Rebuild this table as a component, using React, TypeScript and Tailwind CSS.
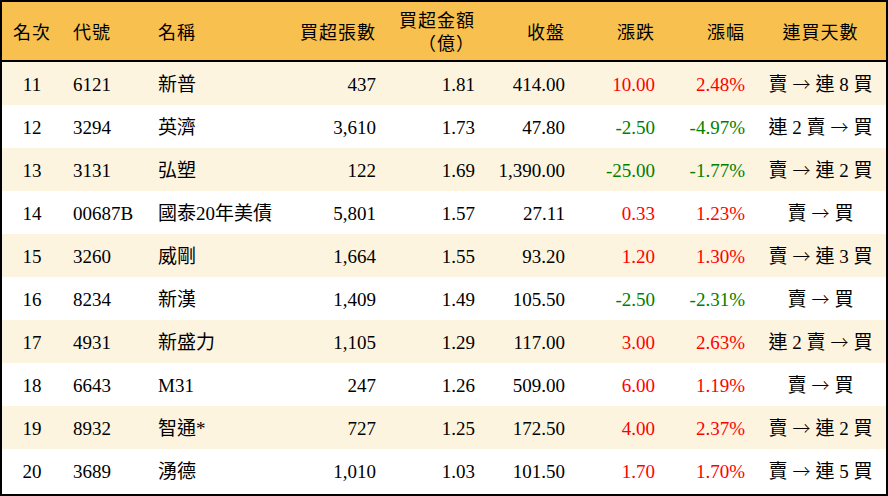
import React from 'react'

type Row = {
  rank: number
  code: string
  name: string
  lots: string
  amount: string
  close: string
  change: string
  pct: string
  streak: string
}

const rows: Row[] = [
  { rank: 11, code: '6121', name: '新普', lots: '437', amount: '1.81', close: '414.00', change: '10.00', pct: '2.48%', streak: '賣→連 8 買' },
  { rank: 12, code: '3294', name: '英濟', lots: '3,610', amount: '1.73', close: '47.80', change: '-2.50', pct: '-4.97%', streak: '連 2 賣→買' },
  { rank: 13, code: '3131', name: '弘塑', lots: '122', amount: '1.69', close: '1,390.00', change: '-25.00', pct: '-1.77%', streak: '賣→連 2 買' },
  { rank: 14, code: '00687B', name: '國泰20年美債', lots: '5,801', amount: '1.57', close: '27.11', change: '0.33', pct: '1.23%', streak: '賣→買' },
  { rank: 15, code: '3260', name: '威剛', lots: '1,664', amount: '1.55', close: '93.20', change: '1.20', pct: '1.30%', streak: '賣→連 3 買' },
  { rank: 16, code: '8234', name: '新漢', lots: '1,409', amount: '1.49', close: '105.50', change: '-2.50', pct: '-2.31%', streak: '賣→買' },
  { rank: 17, code: '4931', name: '新盛力', lots: '1,105', amount: '1.29', close: '117.00', change: '3.00', pct: '2.63%', streak: '連 2 賣→買' },
  { rank: 18, code: '6643', name: 'M31', lots: '247', amount: '1.26', close: '509.00', change: '6.00', pct: '1.19%', streak: '賣→買' },
  { rank: 19, code: '8932', name: '智通*', lots: '727', amount: '1.25', close: '172.50', change: '4.00', pct: '2.37%', streak: '賣→連 2 買' },
  { rank: 20, code: '3689', name: '湧德', lots: '1,010', amount: '1.03', close: '101.50', change: '1.70', pct: '1.70%', streak: '賣→連 5 買' },
]

const cols = 'grid grid-cols-[60px_86px_142px_96px_99px_90px_90px_90px_131px]'

// arrow gets the CJK font so it comes out long and thin like the reference
function Streak({ text }: { text: string }) {
  const [before, after] = text.split('→')
  return (
    <div className="text-center whitespace-pre">
      {before}
      <span style={{ fontFamily: '"Noto Sans CJK TC", sans-serif' }} className="mx-[5px] text-[18px] font-light">→</span>
      {after}
    </div>
  )
}

export default function App() {
  return (
    <div
      className="w-[888px] h-[496px] border-2 border-black bg-white text-[19px] text-black overflow-hidden"
      style={{ fontFamily: '"Liberation Serif", "Noto Sans CJK TC", serif' }}
    >
      {/* header */}
      <div className={`${cols} h-[60px] pt-[3px] items-center bg-[#f8c04e] border-b-2 border-black text-[18px] leading-[24px] tracking-[1px]`}>
        <div className="text-center">名次</div>
        <div className="pl-[11px]">代號</div>
        <div className="pl-[10px]">名稱</div>
        <div className="text-right pr-[10px]">買超張數</div>
        <div className="text-right pr-[10px] leading-[23px]">
          <div>買超金額</div>
          <div>（億）</div>
        </div>
        <div className="text-right pr-[10px]">收盤</div>
        <div className="text-right pr-[10px]">漲跌</div>
        <div className="text-right pr-[10px]">漲幅</div>
        <div className="text-center">連買天數</div>
      </div>

      {rows.map((r, i) => {
        const up = !r.change.startsWith('-')
        const tone = up ? 'text-[#ff0000]' : 'text-[#008000]'
        return (
          <div
            key={r.rank}
            className={`${cols} h-[43px] pt-[3px] items-center ${i % 2 === 0 ? 'bg-[#fdf4e0]' : 'bg-white'}`}
          >
            <div className="text-center">{r.rank}</div>
            <div className="pl-[11px]">{r.code}</div>
            <div className="pl-[10px] whitespace-nowrap">{r.name}</div>
            <div className="text-right pr-[10px]">{r.lots}</div>
            <div className="text-right pr-[10px]">{r.amount}</div>
            <div className="text-right pr-[10px]">{r.close}</div>
            <div className={`text-right pr-[10px] ${tone}`}>{r.change}</div>
            <div className={`text-right pr-[10px] ${tone}`}>{r.pct}</div>
            <Streak text={r.streak} />
          </div>
        )
      })}
    </div>
  )
}
